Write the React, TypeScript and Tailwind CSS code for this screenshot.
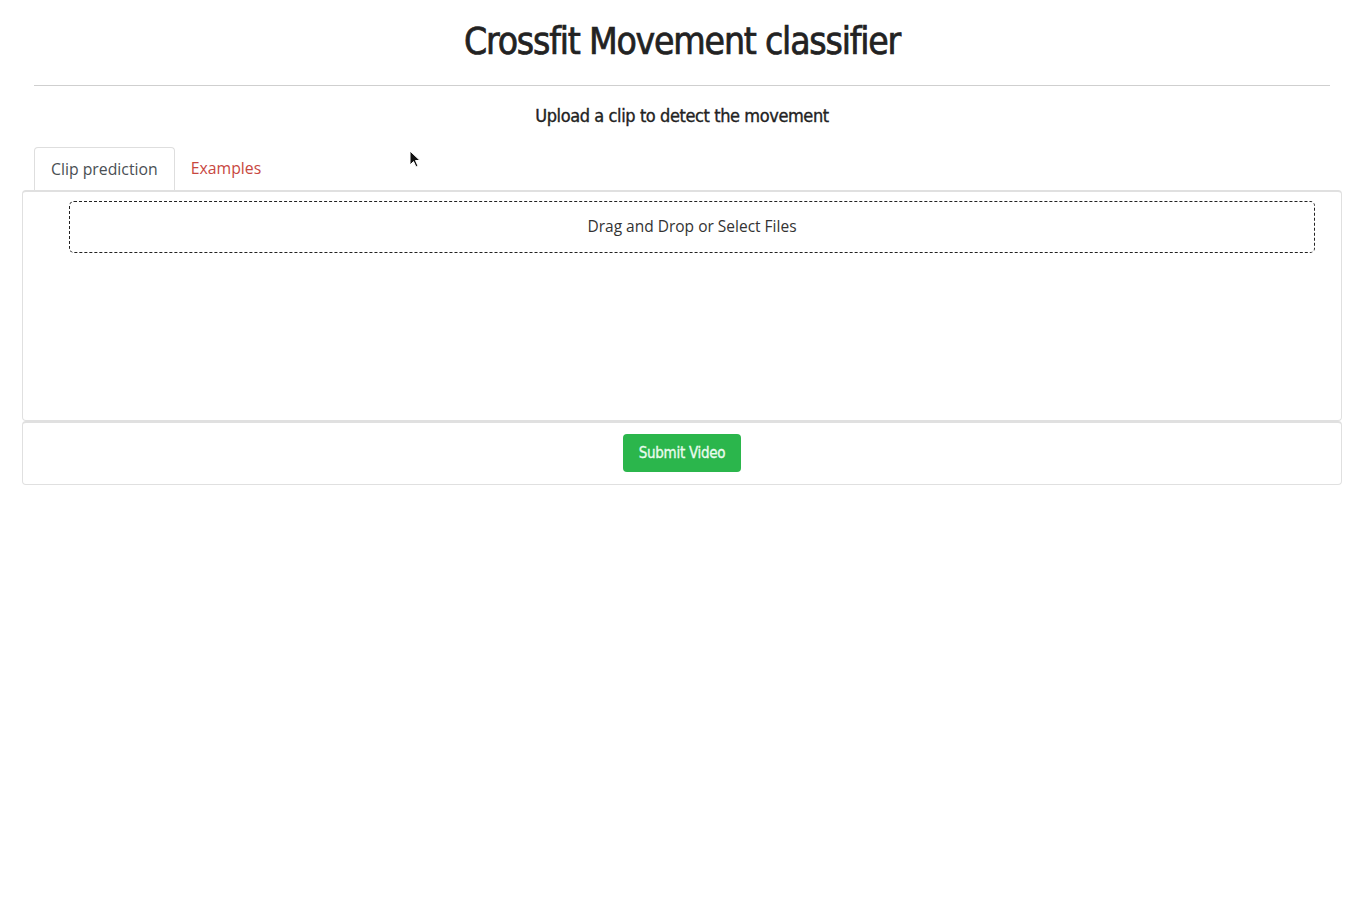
import React from "react";

const NARROW = "font-['DejaVu_Sans',sans-serif] font-stretch-condensed";
const BODY = "font-['Open_Sans','Noto_Sans',sans-serif]";

function Cursor() {
  return (
    <svg
      className="pointer-events-none absolute left-[409px] top-[150px]"
      width="12"
      height="19"
      viewBox="0 0 12 19"
    >
      <path
        d="M1 1 L1 15 L4.5 11.5 L7 17 L9 16 L6.5 10.5 L11 10.5 Z"
        fill="#111"
        stroke="#fff"
        strokeWidth="1"
        strokeLinejoin="round"
      />
    </svg>
  );
}

export default function App() {
  return (
    <div className="relative min-h-[897px] w-[1364px] bg-white text-[#212529]">
      <h1
        className={`${NARROW} pt-[18px] text-center text-[37px] leading-[48px] font-normal tracking-[-1.2px] text-[#222] [-webkit-text-stroke:0.7px_#222]`}
      >
        Crossfit Movement classifier
      </h1>

      <hr className="mx-[34px] mt-[19px] border-t border-[#cfcfcf]" />

      <h2
        className={`${NARROW} mt-[17px] text-center text-[18px] leading-[26px] font-normal tracking-[-0.4px] text-[#222] [-webkit-text-stroke:0.35px_#222]`}
      >
        Upload a clip to detect the movement
      </h2>

      {/* Tabs */}
      <div className={`${BODY} mt-[18px] flex pl-[34px] text-[15.8px]`}>
        <div className="flex h-[43px] items-center rounded-t-[4px] border border-b-0 border-[#dedede] px-[16px] pt-[1px] text-[#4a4f54]">
          Clip prediction
        </div>
        <div className="flex h-[43px] items-center px-[16px] pt-[1px] text-[#c8473f]">
          Examples
        </div>
      </div>

      {/* Upload panel */}
      <div className="ml-[22px] mr-[22px] h-[231px] rounded-[4px] border border-t-2 border-[#e0e0e0] pt-[9px] pl-[46px] pr-[26px]">
        <div
          className={`${BODY} flex h-[52px] items-center justify-center rounded-[5px] border border-dashed border-[#222] text-[15.5px] text-[#333]`}
        >
          Drag and Drop or Select Files
        </div>
      </div>

      {/* Submit panel */}
      <div className="ml-[22px] mr-[22px] flex h-[64px] items-center justify-center rounded-[4px] border border-t-2 border-[#e0e0e0]">
        <button
          className={`${NARROW} -mt-[2px] h-[38px] w-[118px] rounded-[4px] bg-[#2bb64c] pt-[2px] text-[15px] font-normal tracking-[-0.3px] text-[#eafbee] [-webkit-text-stroke:0.3px_#eafbee]`}
        >
          Submit Video
        </button>
      </div>

      <Cursor />
    </div>
  );
}
